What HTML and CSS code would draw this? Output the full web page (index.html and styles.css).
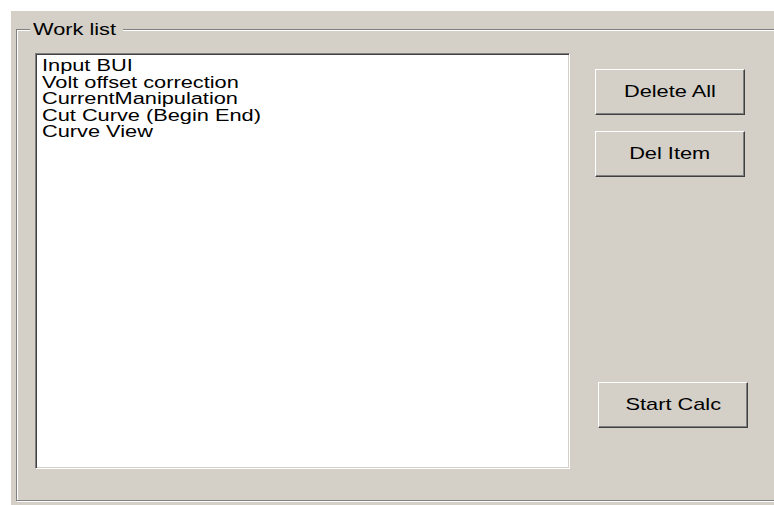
FILE: index.html
```html
<!DOCTYPE html>
<html lang="en">
<head>
<meta charset="utf-8">
<title>Work list</title>
<link rel="stylesheet" href="styles.css">
</head>
<body>
<div class="dlg">
  <div class="group">
    <div class="legend"><span class="t">Work list</span></div>
    <div class="list">
      <div class="item"><span class="t tl">Input BUI</span></div>
      <div class="item"><span class="t tl">Volt offset correction</span></div>
      <div class="item"><span class="t tl">CurrentManipulation</span></div>
      <div class="item"><span class="t tl">Cut Curve (Begin End)</span></div>
      <div class="item"><span class="t tl">Curve View</span></div>
    </div>
    <div class="actions">
      <button class="btn" type="button"><span class="t tc">Delete All</span></button>
      <button class="btn btn-next" type="button"><span class="t tc">Del Item</span></button>
      <button class="btn btn-calc" type="button"><span class="t tc">Start Calc</span></button>
    </div>
  </div>
</div>
</body>
</html>
```

FILE: styles.css
```css
html, body {
  margin: 0;
  height: 100%;
  overflow: hidden;
  background: #fff;
}

.dlg {
  margin: 11px 0 0 11px;
  height: 494px;
  box-sizing: border-box;
  padding: 18px 0 0 5px;
  background: #d4d0c8;
  overflow: hidden;
  font-family: "Liberation Sans", Arial, sans-serif;
  font-size: 17px;
  color: #000;
}

/* wide dialog font: glyphs are stretched horizontally */
.t {
  display: inline-block;
  white-space: nowrap;
  transform: scaleX(1.28);
  transform-origin: 0 50%;
}
.tl {
  font-size: 16px;
  line-height: 16.6px;
  transform: scaleX(1.36);
}
.tc {
  transform-origin: 50% 50%;
}

/* etched group box */
.group {
  position: relative;
  box-sizing: border-box;
  width: 1000px;
  height: 472px;
  border: 1px solid #808080;
  box-shadow: inset 1px 1px 0 #fff, 1px 1px 0 #fff;
  display: flex;
  align-items: flex-start;
  padding: 23px 0 0 18px;
}

.legend {
  position: absolute;
  left: 13px;
  top: -10px;
  width: 90px;
  line-height: 19px;
  background: #d4d0c8;
  padding-left: 3px;
}

/* sunken list box */
.list {
  width: 535px;
  height: 416px;
  box-sizing: border-box;
  background: #fff;
  border: 1px solid;
  border-color: #808080 #fff #fff #808080;
  box-shadow: inset 1px 1px 0 #404040, inset -1px -1px 0 #d4d0c8;
  padding: 4px 0 0 6px;
}

.item {
  height: 16.6px;
  line-height: 16.6px;
}

.actions {
  display: flex;
  flex-direction: column;
  align-items: flex-start;
  margin-left: 25px;
  padding-top: 16px;
}

.btn {
  width: 150px;
  height: 46px;
  box-sizing: border-box;
  margin: 0;
  padding: 0;
  font: inherit;
  color: #000;
  background: #d4d0c8;
  border: 1px solid;
  border-color: #fff #404040 #404040 #fff;
  box-shadow: inset -1px -1px 0 #808080, inset 1px 1px 0 #d4d0c8;
  display: flex;
  align-items: center;
  justify-content: center;
}

.btn-next {
  margin-top: 16px;
}

.btn-calc {
  margin-top: 205px;
  margin-left: 3px;
}
```
